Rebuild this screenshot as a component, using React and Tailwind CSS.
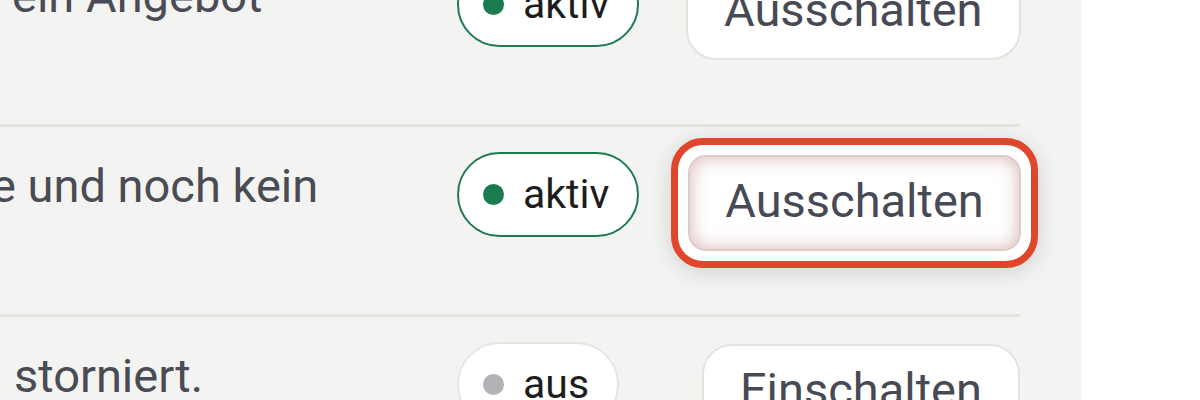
const ROWS = [
  { text: 'ein Angebot', textX: 12, status: 'aktiv', action: 'Ausschalten' },
  { text: 'e und noch kein', textX: -9, status: 'aktiv', action: 'Ausschalten', highlight: true },
  { text: 'storniert.', textX: 14, status: 'aus', action: 'Einschalten' },
]

function StatusBadge({ status }) {
  const on = status === 'aktiv'
  return (
    <span
      className={
        'flex h-[85px] items-center gap-[19px] rounded-full border-2 bg-white pl-[24px] pr-[28px] text-[41px] text-[#1d1d20] ' +
        (on ? 'border-[#1f7a52]' : 'border-[#e6e5e1]')
      }
    >
      <span className={'h-[21px] w-[21px] shrink-0 rounded-full ' + (on ? 'bg-[#1a7a50]' : 'bg-[#b3b3b7]')} />
      {status}
    </span>
  )
}

function ActionButton({ label, highlight }) {
  const button = (
    <button
      className={
        'flex h-[96px] items-center justify-center bg-white px-[36px] pb-[4px] text-[47px] text-[#474a55] ' +
        (highlight
          ? 'w-[333px] rounded-[18px] border-2 border-[#dccbc9] shadow-[inset_0_0_18px_rgba(185,120,115,0.55)]'
          : 'rounded-[30px] border-2 border-[#e4e3df]')
      }
    >
      {label}
    </button>
  )
  if (!highlight) return button
  // focus ring around the highlighted button
  return (
    <div className="-m-[18px] rounded-[32px] border-[7px] border-[#e0462b] bg-white p-[10px] shadow-[0_4px_22px_rgba(0,0,0,0.14)]">
      {button}
    </div>
  )
}

export default function App() {
  return (
    <div className="flex h-[400px] overflow-hidden bg-white" style={{ fontFamily: 'Roboto, "Noto Sans", sans-serif' }}>
      <div className="w-[1081px] shrink-0 overflow-hidden bg-[#f3f3f1] pr-[61px]">
        <div className="-mt-[63px]">
          {ROWS.map((row, i) => (
            <div key={i} className="flex h-[190px] items-start border-b-[3px] border-[#e4e3df]">
              <div className="w-[457px] shrink-0 overflow-hidden whitespace-nowrap pt-[31px]">
                <p className="text-[47px] leading-[55px] text-[#4a4b54]" style={{ marginLeft: row.textX }}>
                  {row.text}
                </p>
              </div>
              <div className="w-[229px] shrink-0 pt-[25px]">
                <div className="inline-flex">
                  <StatusBadge status={row.status} />
                </div>
              </div>
              <div className={'flex flex-1 justify-end ' + (row.highlight ? 'pt-[29px]' : 'pt-[27px]')}>
                <ActionButton label={row.action} highlight={row.highlight} />
              </div>
            </div>
          ))}
        </div>
      </div>
    </div>
  )
}
